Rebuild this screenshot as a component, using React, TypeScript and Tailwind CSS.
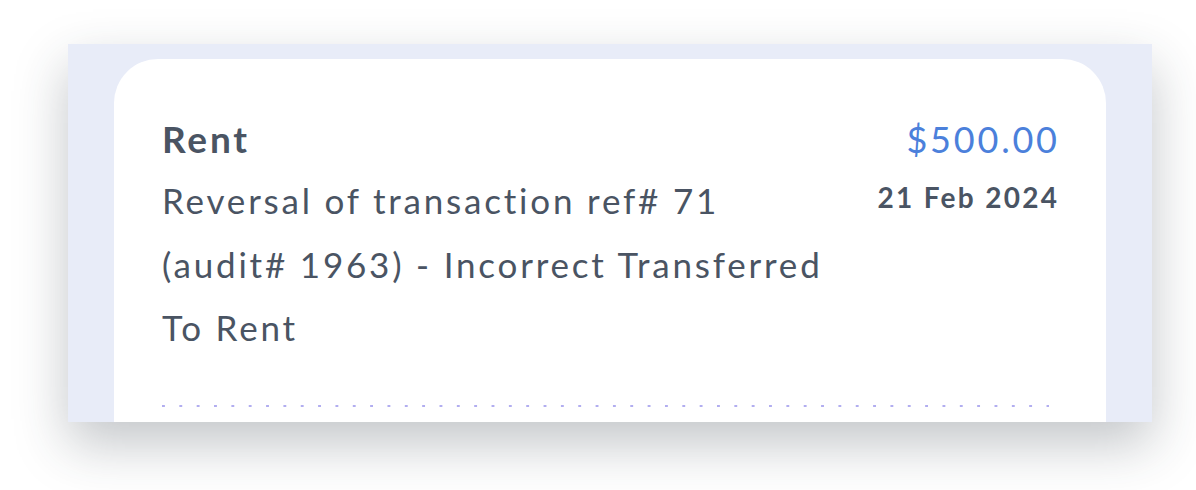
export default function App() {
  return (
    <div className="h-[490px] w-[1196px] overflow-hidden bg-white pl-[68px] pt-[44px] font-['Lato','Noto_Sans',sans-serif]">
      <div className="h-[378px] w-[1084px] overflow-hidden bg-[#e8ecf8] px-[46px] pt-[15px] shadow-[0_22px_50px_rgba(40,50,60,0.28)]">
        <TransactionCard />
      </div>
    </div>
  );
}

function TransactionCard() {
  return (
    <div className="h-[400px] rounded-t-[44px] bg-white pl-[48px] pr-[49px] pt-[56px]">
      <div className="flex justify-between gap-4">
        <div className="w-[670px]">
          <h3 className="text-[37px] font-bold leading-[48px] tracking-[2.8px] text-[#4a5463]">Rent</h3>
          <p className="mt-[6px] text-[35px] leading-[63.5px] tracking-[2.8px] text-[#4a5463]">
            Reversal of transaction ref# 71 (audit# 1963) - Incorrect Transferred To Rent
          </p>
        </div>
        <div className="flex flex-col items-end">
          <span className="mr-[-2.8px] text-[36px] font-normal leading-[48px] tracking-[2.8px] text-[#4b80db]">
            $500.00
          </span>
          <span className="mr-[-2.3px] mt-[16px] text-[28px] font-bold leading-[36px] tracking-[2.3px] text-[#4a5463]">
            21 Feb 2024
          </span>
        </div>
      </div>
      <div className="mt-[45px] h-[2px] w-[887px] bg-[linear-gradient(to_right,#b2aef0_3px,transparent_3px)] bg-[length:17.35px_2px] bg-repeat-x" />
    </div>
  );
}
